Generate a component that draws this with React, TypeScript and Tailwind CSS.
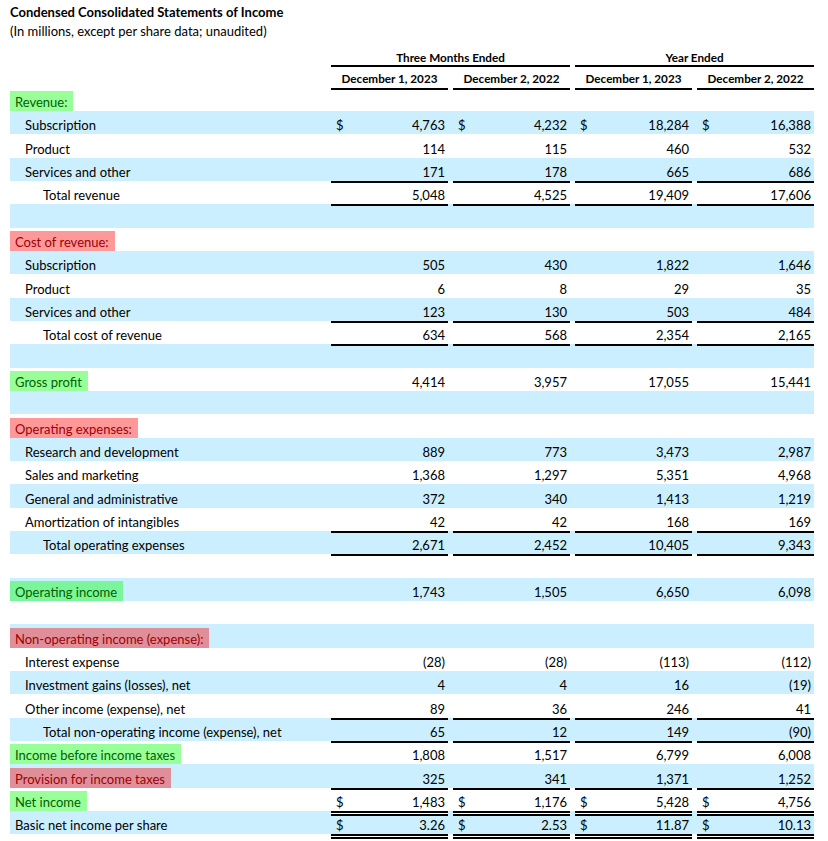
import React from "react";

type Row = {
  label?: string;
  indent?: 0 | 1 | 2;
  hl?: "g" | "r";
  vals?: [string, string, string, string];
  dollar?: boolean;
  line?: boolean;
  dbl?: boolean;
  first?: boolean;
};

const rows: Row[] = [
  { label: "Revenue:", hl: "g", first: true },
  { label: "Subscription", indent: 1, vals: ["4,763", "4,232", "18,284", "16,388"], dollar: true },
  { label: "Product", indent: 1, vals: ["114", "115", "460", "532"] },
  { label: "Services and other", indent: 1, vals: ["171", "178", "665", "686"] },
  { label: "Total revenue", indent: 2, vals: ["5,048", "4,525", "19,409", "17,606"], line: true },
  { line: true },
  { label: "Cost of revenue:", hl: "r" },
  { label: "Subscription", indent: 1, vals: ["505", "430", "1,822", "1,646"] },
  { label: "Product", indent: 1, vals: ["6", "8", "29", "35"] },
  { label: "Services and other", indent: 1, vals: ["123", "130", "503", "484"] },
  { label: "Total cost of revenue", indent: 2, vals: ["634", "568", "2,354", "2,165"], line: true },
  { line: true },
  { label: "Gross profit", hl: "g", vals: ["4,414", "3,957", "17,055", "15,441"] },
  {},
  { label: "Operating expenses:", hl: "r" },
  { label: "Research and development", indent: 1, vals: ["889", "773", "3,473", "2,987"] },
  { label: "Sales and marketing", indent: 1, vals: ["1,368", "1,297", "5,351", "4,968"] },
  { label: "General and administrative", indent: 1, vals: ["372", "340", "1,413", "1,219"] },
  { label: "Amortization of intangibles", indent: 1, vals: ["42", "42", "168", "169"] },
  { label: "Total operating expenses", indent: 2, vals: ["2,671", "2,452", "10,405", "9,343"], line: true },
  { line: true },
  { label: "Operating income", hl: "g", vals: ["1,743", "1,505", "6,650", "6,098"] },
  {},
  { label: "Non-operating income (expense):", hl: "r" },
  { label: "Interest expense", indent: 1, vals: ["(28)", "(28)", "(113)", "(112)"] },
  { label: "Investment gains (losses), net", indent: 1, vals: ["4", "4", "16", "(19)"] },
  { label: "Other income (expense), net", indent: 1, vals: ["89", "36", "246", "41"] },
  { label: "Total non-operating income (expense), net", indent: 2, vals: ["65", "12", "149", "(90)"], line: true },
  { label: "Income before income taxes", hl: "g", vals: ["1,808", "1,517", "6,799", "6,008"], line: true },
  { label: "Provision for income taxes", hl: "r", vals: ["325", "341", "1,371", "1,252"] },
  { label: "Net income", hl: "g", vals: ["1,483", "1,176", "5,428", "4,756"], dollar: true, line: true },
  { label: "Basic net income per share", vals: ["3.26", "2.53", "11.87", "10.13"], dollar: true, dbl: true },
];

const font = { fontFamily: "Lato, 'Noto Sans', sans-serif" };

function Label({ r }: { r: Row }) {
  if (!r.label) return <div className="w-[316px]" />;
  if (r.hl) {
    const cls =
      r.hl === "g"
        ? "bg-[rgba(0,255,0,0.4)] text-[#006100]"
        : "bg-[rgba(255,0,0,0.4)] text-[#9c0006]";
    return (
      <div className="w-[316px] h-full flex items-end">
        <span className={`h-[20px] leading-[22px] pl-[5px] pr-[6px] whitespace-nowrap ${cls}`}>{r.label}</span>
      </div>
    );
  }
  const pad = r.indent === 2 ? "pl-[33px]" : r.indent === 1 ? "pl-[15px]" : "pl-[5px]";
  return (
    <div className={`w-[316px] h-full flex items-end ${pad}`}>
      <span className="h-[20px] leading-[22px] whitespace-nowrap">{r.label}</span>
    </div>
  );
}

function Cell({ v, r }: { v?: string; r: Row }) {
  const sh = r.dbl
    ? "shadow-[inset_0_2px_0_#000,inset_0_3px_0_#fff,inset_0_5px_0_#000]"
    : r.line
    ? "shadow-[inset_0_2px_0_#000]"
    : "";
  return (
    <div className={`w-[117px] h-full flex items-end justify-between pl-[5px] pr-[3px] ${sh}`}>
      <span className="h-[20px] leading-[22px]">{r.dollar ? "$" : ""}</span>
      <span className="h-[20px] leading-[22px]">{v ?? ""}</span>
    </div>
  );
}

export default function App() {
  return (
    <div className="bg-white w-[828px] h-[841px] text-black text-[13px]" style={font}>
      <div className="pl-[10px] pt-[2px]">
        <div className="h-[20px] leading-[20px] font-bold">Condensed Consolidated Statements of Income</div>
        <div className="h-[18px] leading-[18px]">(In millions, except per share data; unaudited)</div>
        <div className="h-[7px]" />
        <div className="flex gap-[5px] w-[804px] text-[11.7px] font-bold">
          <div className="w-[316px]" />
          <div className="w-[239px] h-[20px] border-b-2 border-black text-center leading-[20px]">Three Months Ended</div>
          <div className="w-[239px] h-[20px] border-b-2 border-black text-center leading-[20px]">Year Ended</div>
        </div>
        <div className="flex gap-[5px] w-[804px] text-[11.7px] font-bold">
          <div className="w-[316px]" />
          {["December 1, 2023", "December 2, 2022", "December 1, 2023", "December 2, 2022"].map((d, i) => (
            <div key={i} className="w-[117px] h-[23px] border-b-2 border-black text-center leading-[23px]">{d}</div>
          ))}
        </div>
        <div className="w-[804px]">
          {rows.map((r, i) => (
            <div
              key={i}
              className={`flex gap-[5px] ${r.first ? "h-[21px]" : "h-[23.33px]"} ${i % 2 === 1 ? "bg-[#ccefff]" : "bg-white"}`}
            >
              <Label r={r} />
              {[0, 1, 2, 3].map((k) => (
                <Cell key={k} v={r.vals?.[k]} r={r} />
              ))}
            </div>
          ))}
          <div className="flex gap-[5px] h-[5px]">
            <div className="w-[316px]" />
            {[0, 1, 2, 3].map((k) => (
              <div key={k} className="w-[117px] h-full border-b-[5px] border-double border-black" />
            ))}
          </div>
        </div>
      </div>
    </div>
  );
}
